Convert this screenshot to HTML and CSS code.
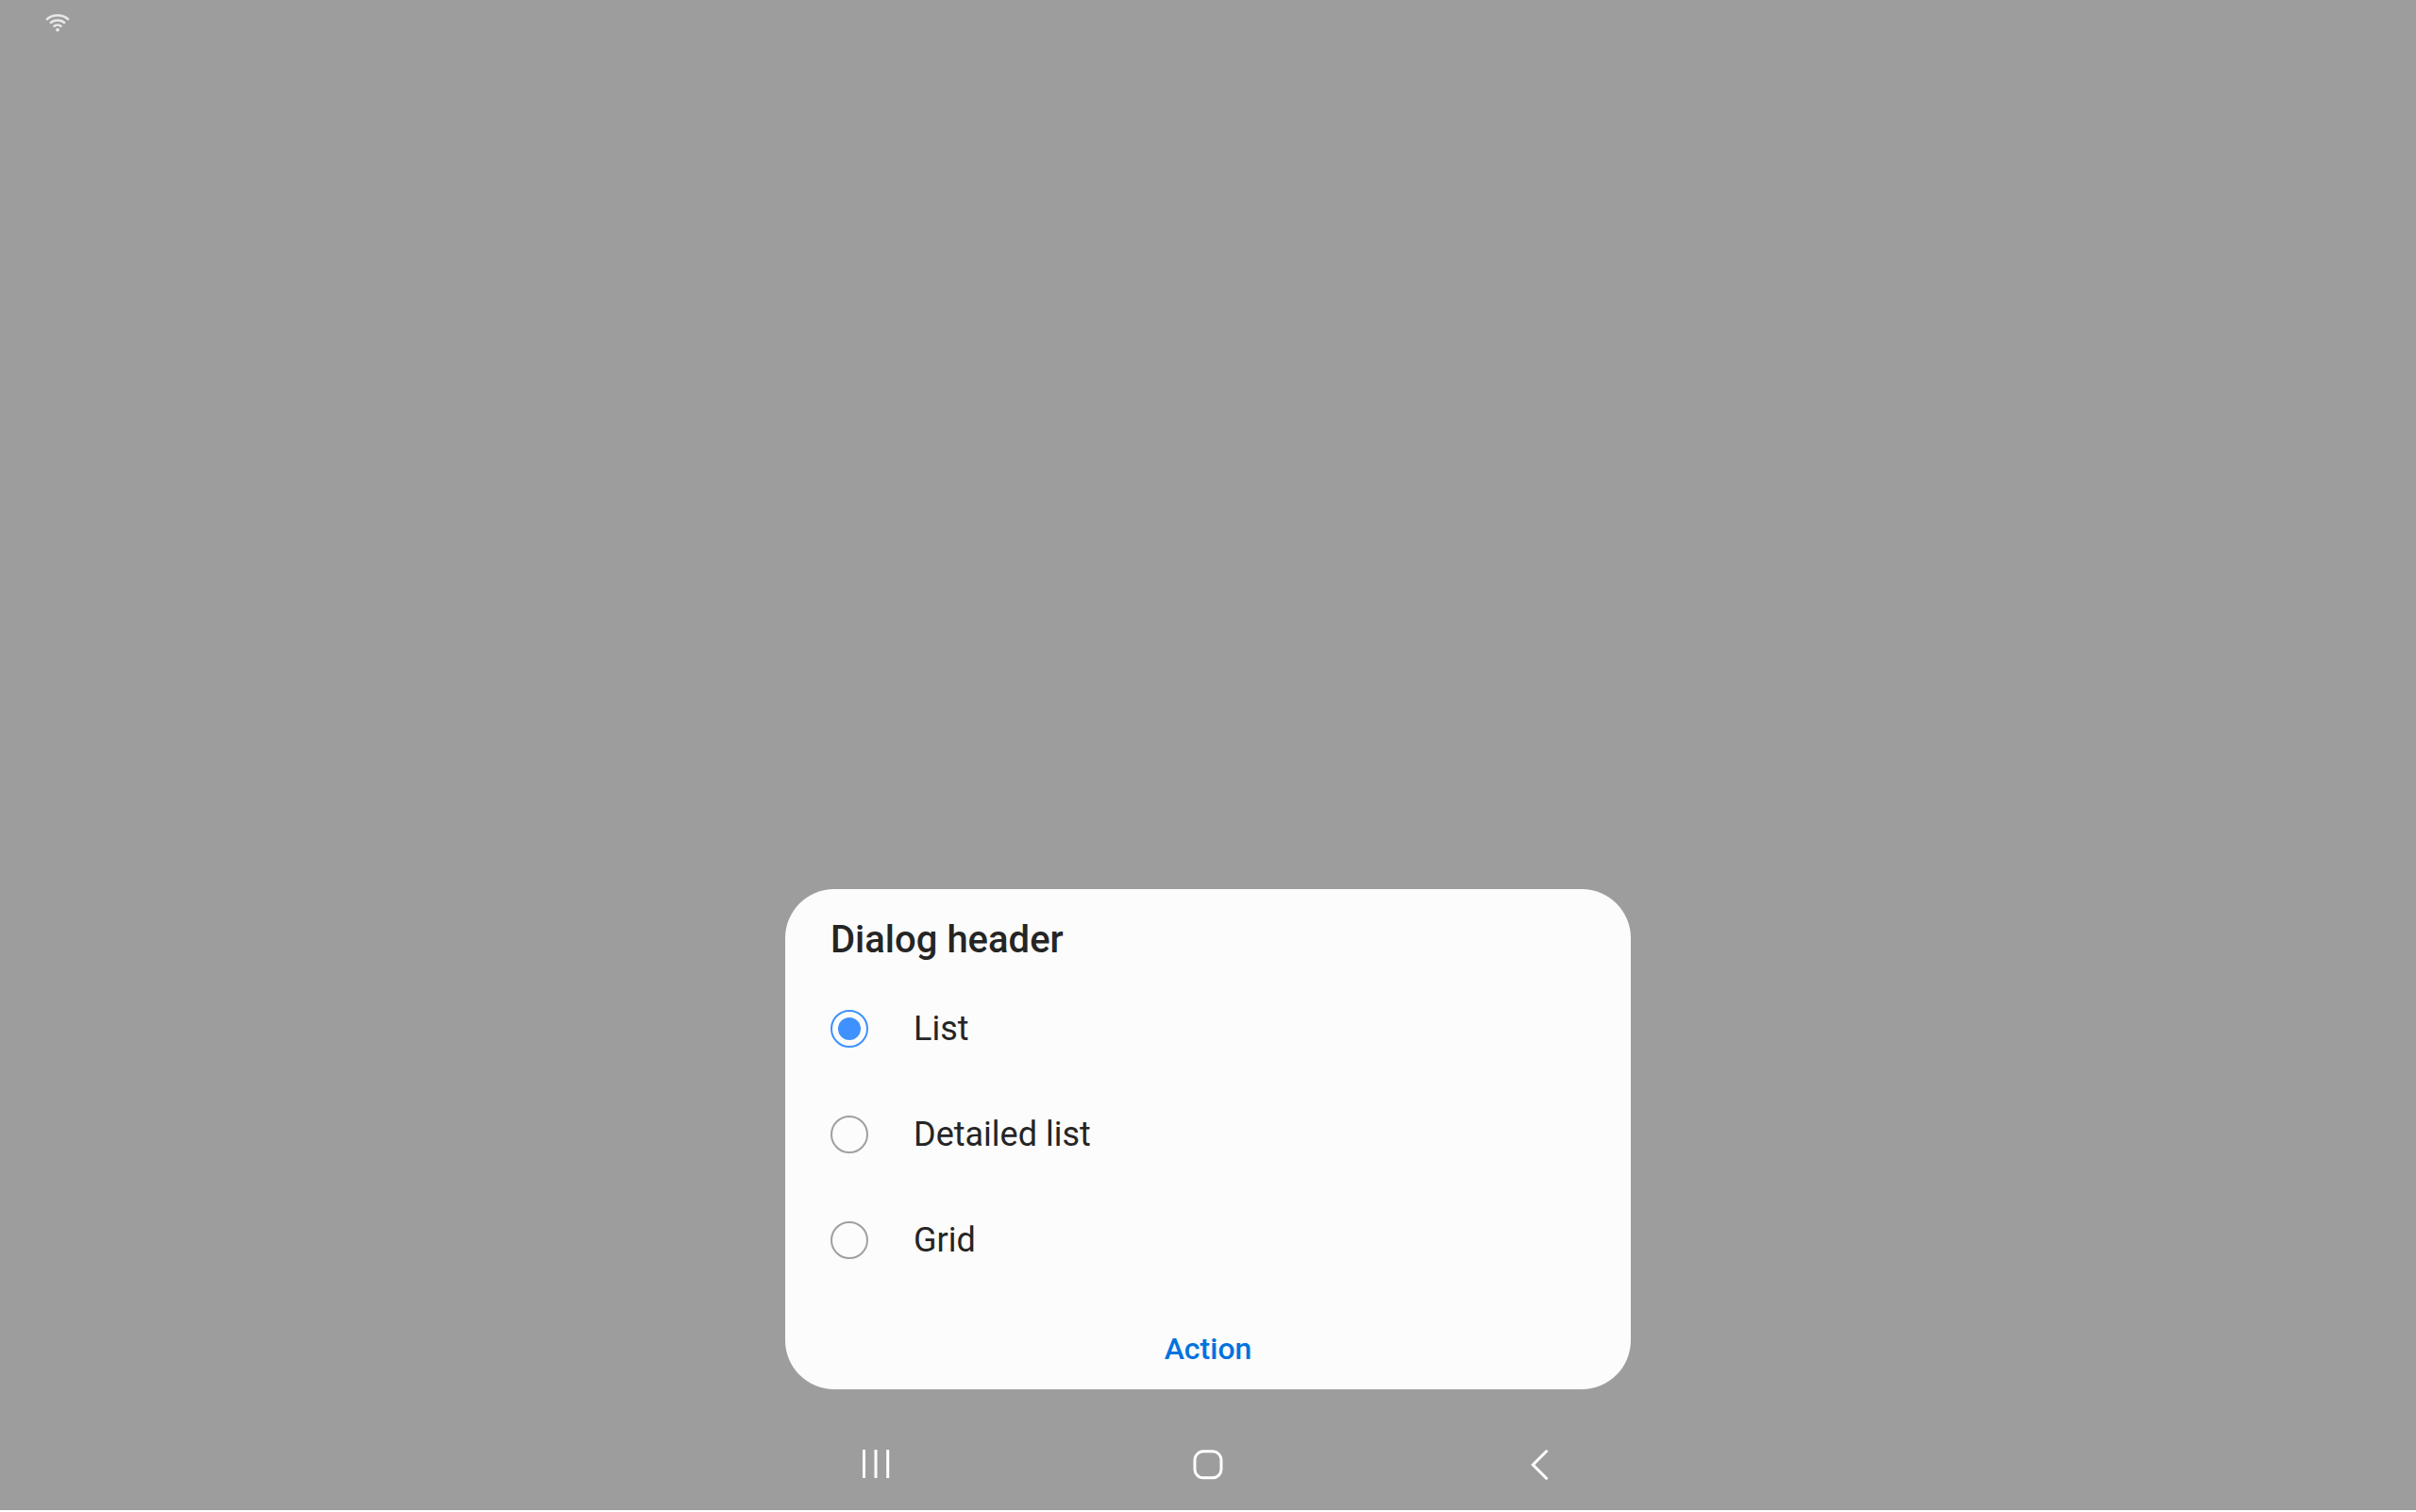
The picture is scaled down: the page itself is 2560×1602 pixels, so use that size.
FILE: index.html
```html
<!DOCTYPE html>
<html lang="en">
<head>
<meta charset="utf-8">
<meta name="viewport" content="width=device-width, initial-scale=1">
<title>Dialog</title>
<link rel="stylesheet" href="styles.css">
</head>
<body>
<div class="screen">
  <header class="status-bar">
    <svg class="wifi" viewBox="0 0 26 20" role="img" aria-label="Wi-Fi">
      <path d="M1.2 6.8C7.6 0.6 18.4 0.6 24.8 6.8M5 10.6C9.4 6.4 16.6 6.4 21 10.6M8.6 14.3C11.2 11.9 14.8 11.9 17.4 14.3"/>
      <circle cx="13" cy="17.6" r="1.9"/>
    </svg>
  </header>
  <main class="stage">
    <form class="dialog" role="dialog" aria-labelledby="dialog-title">
      <h1 class="dialog-title" id="dialog-title">Dialog header</h1>
      <div class="options" role="radiogroup" aria-labelledby="dialog-title">
        <label class="option"><input class="radio" type="radio" name="view" value="list" checked><span>List</span></label>
        <label class="option"><input class="radio" type="radio" name="view" value="detailed"><span>Detailed list</span></label>
        <label class="option"><input class="radio" type="radio" name="view" value="grid"><span>Grid</span></label>
      </div>
      <button class="action" type="button">Action</button>
    </form>
  </main>
  <nav class="nav-bar" aria-label="System navigation">
    <button class="nav-button" type="button" aria-label="Recents">
      <svg class="nav-icon" viewBox="0 0 40 40"><path d="M7.5 4V34M20 4V34M32.7 4V34"/></svg>
    </button>
    <button class="nav-button" type="button" aria-label="Home">
      <svg class="nav-icon" viewBox="0 0 40 40"><rect x="6" y="5.8" width="28" height="28" rx="9"/></svg>
    </button>
    <button class="nav-button" type="button" aria-label="Back">
      <svg class="nav-icon" viewBox="0 0 40 40"><path d="M27.5 4.8L12.3 20L27.5 35.2"/></svg>
    </button>
  </nav>
</div>
</body>
</html>
```
FILE: styles.css
```css
* {
  box-sizing: border-box;
}

body {
  margin: 0;
  background: #fff;
  color: #252525;
  font-family: Roboto, "Liberation Sans", sans-serif;
}

button {
  border: 0;
  padding: 0;
  background: none;
  font: inherit;
  cursor: pointer;
}

.screen {
  display: flex;
  flex-direction: column;
  min-height: calc(100vh - 2px);
  background: #9d9d9d;
}

.status-bar {
  display: flex;
  align-items: center;
  height: 48px;
  padding: 0 48px;
}

.wifi {
  width: 26px;
  height: 20px;
  fill: none;
  stroke: #e8e8e8;
  stroke-width: 2.5;
}

.wifi circle {
  fill: #e8e8e8;
  stroke: none;
}

.stage {
  display: flex;
  flex: 1;
  align-items: flex-end;
  justify-content: center;
  padding-bottom: 32px;
}

.dialog {
  width: 35%;
  min-width: 560px;
  padding: 30px 48px 0;
  border-radius: 52px;
  background: #fcfcfc;
}

.dialog-title {
  margin: 0 0 14px;
  font-size: 40px;
  font-weight: 500;
  line-height: 48px;
}

.option {
  display: flex;
  align-items: center;
  gap: 48px;
  height: 112px;
  font-size: 36px;
  line-height: 44px;
  cursor: pointer;
}

.radio {
  appearance: none;
  flex: none;
  display: grid;
  place-items: center;
  width: 40px;
  height: 40px;
  margin: 0;
  border: 2px solid #a0a0a0;
  border-radius: 50%;
}

.radio:checked {
  border-color: #3e91ff;
}

.radio:checked::before {
  content: "";
  width: 24px;
  height: 24px;
  border-radius: 50%;
  background: #3e91ff;
}

.action {
  display: block;
  width: 100%;
  height: 86px;
  margin-top: 16px;
  color: #0072de;
  font-size: 32px;
  font-weight: 500;
  line-height: 40px;
}

.nav-bar {
  display: flex;
  justify-content: center;
  gap: 192px;
  height: 96px;
}

.nav-button {
  display: grid;
  place-items: center;
  width: 160px;
}

.nav-icon {
  width: 40px;
  height: 40px;
  fill: none;
  stroke: #fff;
  stroke-width: 3;
  stroke-linecap: butt;
}
```
